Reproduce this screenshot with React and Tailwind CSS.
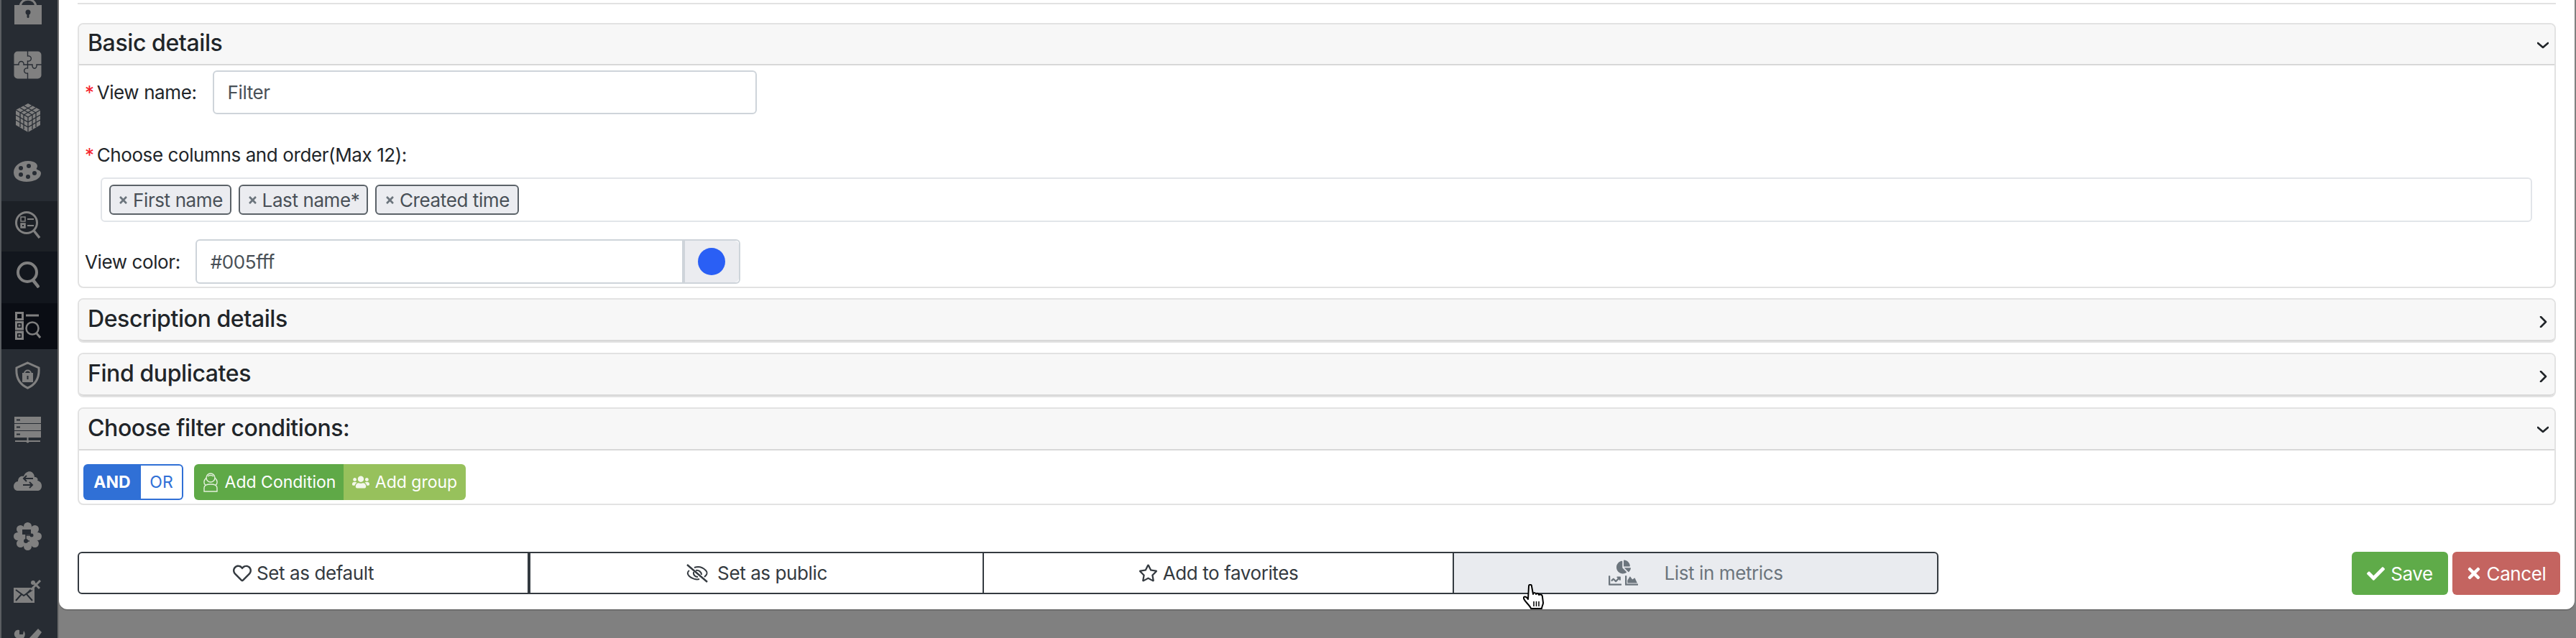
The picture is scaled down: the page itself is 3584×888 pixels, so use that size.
import { FaCheck, FaTimes, FaRegHeart, FaRegStar, FaUsers, FaChartPie, FaChartLine, FaChartArea } from "react-icons/fa";

const navDark = "#272c33";

// sidebar icons, all hand drawn, gray on the dimmed nav
const LockIcon = () => (
  <svg width="40" height="37" viewBox="0 0 40 37" className="-mt-[3px]">
    <path d="M9 12 C10 -1 30 -1 31 12" fill="none" stroke="#808080" strokeWidth="3" />
    <rect x="1" y="10" width="38" height="27" fill="#808080" />
    <circle cx="20" cy="20" r="3.5" fill={navDark} />
    <rect x="18.5" y="21" width="3" height="7" rx="1.5" fill={navDark} />
  </svg>
);

const PuzzleIcon = () => (
  <svg width="39" height="39" viewBox="0 0 39 39">
    <rect x="0.5" y="0.5" width="38" height="38" rx="5" fill="#808080" />
    <path d="M0 19 H7 C6 13 15 13 14 19 H19.5 M19.5 0 V7 C26 6 26 15 19.5 14 V24 C13 23 13 32 19.5 31 V39 M19.5 19 H26 C25 26 33 26 32 19 H39" fill="none" stroke={navDark} strokeWidth="1.4" />
  </svg>
);

const CubeIcon = () => (
  <svg width="36" height="40" viewBox="0 0 36 40">
    <path d="M18 0 L35 9 V30 L18 40 L1 30 V9 Z" fill="#808080" />
    <path d="M1 9 L18 19 L35 9 M18 19 V40 M7 6 L24 16 M12 3 L29 13 M24 3 L7 13 M29 6 L12 16 M7 12 V33 M12 15 V36 M24 15 V36 M29 12 V33 M1 16 L18 26 L35 16 M1 23 L18 33 L35 23" fill="none" stroke={navDark} strokeWidth="1.3" />
  </svg>
);

const PaletteIcon = () => (
  <svg width="39" height="29" viewBox="0 0 39 29">
    <path d="M20 0 C31 0 35 6 32 10 C30 13 39 12 38 18 C37 25 28 29 18 29 C7 29 0 24 0 16 C0 7 9 0 20 0 Z" fill="#808080" />
    <circle cx="10" cy="10" r="3" fill={navDark} />
    <circle cx="21" cy="7" r="3" fill={navDark} />
    <circle cx="10" cy="19" r="3" fill={navDark} />
    <circle cx="20" cy="22" r="3" fill={navDark} />
    <circle cx="29" cy="17" r="3" fill={navDark} />
  </svg>
);

const ListSearchIcon = ({ bg }) => (
  <svg width="36" height="38" viewBox="0 0 36 38">
    <circle cx="16" cy="16" r="14.5" fill="none" stroke="#808080" strokeWidth="3" />
    <path d="M26 27 L34 37" stroke="#808080" strokeWidth="3.5" />
    <rect x="8" y="8" width="6" height="6" fill="none" stroke="#808080" strokeWidth="1.5" />
    <rect x="8" y="17" width="6" height="6" fill="#808080" stroke="#808080" strokeWidth="1.5" />
    <rect x="10" y="19" width="2" height="2" fill={bg} />
    <path d="M17 11 H26 M17 20 H26" stroke="#808080" strokeWidth="2" />
  </svg>
);

const SearchIcon = () => (
  <svg width="32" height="37" viewBox="0 0 32 37">
    <circle cx="15" cy="15" r="13" fill="none" stroke="#808080" strokeWidth="4" />
    <path d="M23 26 L31 36" stroke="#808080" strokeWidth="4.5" />
  </svg>
);

const ListIcon = ({ bg }) => (
  <svg width="36" height="39" viewBox="0 0 36 39">
    <rect x="0" y="0" width="12" height="39" fill="#808080" />
    <path d="M0 12.5 H12 M0 26 H12" stroke={bg} strokeWidth="1" />
    <rect x="3" y="3" width="6" height="6" fill={bg} />
    <rect x="3.7" y="16.7" width="4.6" height="4.6" fill="none" stroke={bg} strokeWidth="1.4" />
    <rect x="3.7" y="30.7" width="4.6" height="4.6" fill="none" stroke={bg} strokeWidth="1.4" />
    <path d="M15 5 H33" stroke="#808080" strokeWidth="3" />
    <circle cx="24" cy="23" r="8.5" fill="none" stroke="#808080" strokeWidth="2.5" />
    <path d="M30 30 L35 36" stroke="#808080" strokeWidth="3" />
  </svg>
);

const ShieldIcon = () => (
  <svg width="35" height="39" viewBox="0 0 35 39">
    <path d="M17.5 2 L33 9 C34 22 29 32 17.5 37 C6 32 1 22 2 9 Z" fill="none" stroke="#808080" strokeWidth="3" />
    <path d="M13 17 C13 11 22 11 22 17" fill="none" stroke="#808080" strokeWidth="2" />
    <rect x="10" y="16" width="15" height="13" fill="#808080" />
    <rect x="16.5" y="20" width="2" height="5" fill={navDark} />
  </svg>
);

const ServerIcon = () => (
  <svg width="37" height="37" viewBox="0 0 37 37">
    <rect x="0" y="0" width="37" height="9" fill="#808080" />
    <rect x="0" y="10" width="37" height="9" fill="#808080" />
    <rect x="0" y="20" width="37" height="9" fill="#808080" />
    <path d="M3 4.5 H8 M3 14.5 H8 M3 24.5 H8" stroke={navDark} strokeWidth="2" />
    <path d="M1 34 H36 M18.5 29 V35" stroke="#808080" strokeWidth="2" />
    <circle cx="18.5" cy="34.5" r="2" fill="#808080" />
  </svg>
);

const CloudIcon = () => (
  <svg width="39" height="27" viewBox="0 0 39 27">
    <path d="M6 27 C-2 27 -2 15 6 14 C6 7 12 6 14 7 C17 -2 28 -2 29 8 C34 8 34 12 33 13 C41 14 41 27 33 27 Z" fill="#808080" />
    <path d="M27 10 H14 M18 6 L14 10 L18 14 M13 19 H26 M22 15 L26 19 L22 23" fill="none" stroke={navDark} strokeWidth="2" />
  </svg>
);

const GearIcon = () => (
  <svg width="39" height="39" viewBox="0 0 39 39">
    <circle cx="19.5" cy="19.5" r="14" fill="#808080" />
    {[[19.5, 5.5], [29.5, 9.5], [33.5, 19.5], [29.5, 29.5], [19.5, 33.5], [9.5, 29.5], [5.5, 19.5], [9.5, 9.5]].map(([cx, cy], i) => (
      <circle key={i} cx={cx} cy={cy} r="5.5" fill="#808080" />
    ))}
    <rect x="12" y="10" width="12" height="7" fill={navDark} />
    <path d="M17 17 V26 H22 M17 18 H24" fill="none" stroke={navDark} strokeWidth="1.5" />
    <circle cx="25" cy="18" r="2.5" fill={navDark} />
    <circle cx="17" cy="26" r="3" fill={navDark} />
  </svg>
);

const MailIcon = () => (
  <svg width="39" height="32" viewBox="0 0 39 32">
    <path d="M0 11 H25 L14 22 L29 11 V32 H0 Z" fill="#808080" />
    <path d="M3 14 L14 22 L26 14 M3 29 L11 20 M26 29 L18 20" fill="none" stroke={navDark} strokeWidth="2" />
    <path d="M24 14 L37 1 M26 2 L36 12" stroke="#808080" strokeWidth="3" />
    <circle cx="27" cy="4" r="3" fill="#808080" />
  </svg>
);

const ToolsIcon = () => (
  <svg width="39" height="20" viewBox="0 0 39 20">
    <path d="M1 6 C3 0 8 2 8 2 L8 8 L13 8 L14 3 C18 8 14 13 14 13 L22 20 H12 L8 14 C3 14 0 10 1 6 Z" fill="#808080" />
    <path d="M20 15 L34 0 L39 5 L28 20 H23 Z" fill="#808080" />
  </svg>
);

const navRows = [
  { cls: "h-[64px]", icon: <LockIcon /> },
  { cls: "h-[72px] pt-[7px]", icon: <PuzzleIcon /> },
  { cls: "h-[74px] pt-[8px]", icon: <CubeIcon /> },
  { cls: "h-[70px] pt-[14px]", icon: <PaletteIcon /> },
  { cls: "h-[70px] pt-[14px] bg-[#1c2026]", icon: <ListSearchIcon bg="#1c2026" /> },
  { cls: "h-[72px] pt-[14px] bg-[#12161d]", icon: <SearchIcon /> },
  { cls: "h-[64px] pt-[12px] bg-[#0a0d14]", icon: <ListIcon bg="#0a0d14" /> },
  { cls: "h-[84px] pt-[17px]", icon: <ShieldIcon /> },
  { cls: "h-[75px] pt-[10px]", icon: <ServerIcon /> },
  { cls: "h-[70px] pt-[11px]", icon: <CloudIcon /> },
  { cls: "h-[80px] pt-[12px]", icon: <GearIcon /> },
  { cls: "h-[70px] pt-[12px]", icon: <MailIcon /> },
  { cls: "h-[23px] pt-[10px]", icon: <ToolsIcon /> },
];

const Chevron = ({ open }) => (
  <svg width="16" height="16" viewBox="0 0 16 16" fill="none" stroke="#212529" strokeWidth="2.6" strokeLinecap="round" strokeLinejoin="round">
    {open ? <path d="M1 4 L8 10 L15 4" /> : <path d="M5 1 L12 8 L5 15" />}
  </svg>
);

// collapsible card, the open one has the body under it
const Card = ({ title, open, headerHeight, className, children }) => (
  <div className={"border-2 border-[#e2e2e2] rounded-lg " + (className || "")}>
    <div className={"flex items-center justify-between bg-[#f7f7f7] border-b-2 border-[#d8d8d8] pl-[12px] pr-[6px] " + headerHeight + (open ? " rounded-t-md" : " rounded-md")}>
      <span className="text-[32px] font-medium text-[#212529] tracking-[-0.4px] leading-none -mt-[3px]">{title}</span>
      <span className={open ? "pt-[4px] pr-[2px]" : "pt-[6px] pr-[2px]"}><Chevron open={open} /></span>
    </div>
    {children}
  </div>
);

const Chip = ({ label, width }) => (
  <span className={"flex items-center justify-center gap-[6px] h-[42px] bg-[#ebecf0] border-2 border-[#5b6268] rounded-md text-[#495057] " + width}>
    <FaTimes className="text-[#6c757d] w-[15px] h-[15px]" />
    {label}
  </span>
);

const Required = () => <span className="text-[#f5222d] mr-[4px]">*</span>;

const WomanIcon = () => (
  <svg width="24" height="28" viewBox="0 0 24 28" fill="none" stroke="#e4f0dd" strokeWidth="1.4">
    <circle cx="12" cy="8" r="6" />
    <path d="M6 8 C2 12 2 16 5 18 M18 8 C22 12 22 16 19 18 M8 6 C10 4 14 4 16 6" />
    <path d="M3 27 V22 C3 18 8 17 12 17 C16 17 21 18 21 22 V27 Z" />
  </svg>
);

const EyeSlash = () => (
  <svg width="32" height="26" viewBox="0 0 32 26" fill="none" stroke="#343a40" strokeWidth="2">
    <path d="M5 9 C2 11 2 14 5 17 C9 21 15 22 19 21 M12 5 C18 3 24 5 28 9 C30 11 30 14 28 16 L26 18" />
    <path d="M11 11 C10 15 13 18 17 18 M14 9 C18 8 22 11 22 15" />
    <path d="M2 1 L30 25" strokeWidth="2.4" />
  </svg>
);

const HandCursor = () => (
  <svg width="32" height="36" viewBox="0 0 32 36" className="absolute left-[2119px] top-[813px]">
    <path d="M8 3 C8 0 12 0 12 3 L14 14 C15 11 18 12 18 14 C19 12 22 13 22 15 C23 14 27 14 27 18 L28 26 C28 29 26 31 26 34 H11 C10 30 2 24 1 20 C0 17 4 16 7 21 Z" fill="#fff" stroke="#000" strokeWidth="2" strokeLinejoin="round" />
    <path d="M15 24 V31 M18.5 24 V31 M22 24 V31" stroke="#000" strokeWidth="1.5" />
  </svg>
);

export default function App() {
  return (
    <div className="relative flex w-[3584px] h-[888px] overflow-hidden bg-[#808080] font-['Inter',sans-serif] text-[26px] tracking-[-0.4px]">
      {/* nav */}
      <div className="w-[80px] h-full shrink-0 border-l-2 border-[#5a5d61] bg-[#272c33] overflow-hidden">
        {navRows.map((row, i) => (
          <div key={i} className={"flex justify-center pr-[5px] " + row.cls}>{row.icon}</div>
        ))}
      </div>
      <div className="w-[2px] bg-[#6e6e6e] shrink-0" />

      {/* modal */}
      <div className="w-[3500px] h-[848px] bg-white rounded-b-xl px-[26px] shrink-0 shadow-[0_2px_0_#6e6e6e]">
        <div className="h-[6px] border-b-2 border-[#e2e2e2]" />

        <Card title="Basic details" open headerHeight="h-[57px]" className="mt-[26px]">
          <div className="pt-[7px] pb-[4px] px-[6px] text-[#212529]">
            <div className="flex items-center gap-[22px]">
              <label className="pl-[2px]"><Required />View name:</label>
              <div className="flex items-center w-[757px] h-[61px] border-2 border-[#ced4da] rounded-md pl-[19px] text-[#495057]">Filter</div>
            </div>
            <label className="block mt-[37px] leading-[39px] pl-[2px]"><Required />Choose columns and order(Max 12):</label>
            <div className="flex items-center gap-[10px] mt-[12px] ml-[24px] w-[3383px] h-[62px] border-2 border-[#e2e5e9] rounded-md pl-[10px]">
              <Chip label="First name" width="w-[170px]" />
              <Chip label="Last name*" width="w-[180px]" />
              <Chip label="Created time" width="w-[200px]" />
            </div>
            <div className="flex items-center gap-[21px] mt-[24px]">
              <label className="pl-[2px]">View color:</label>
              <div className="flex w-[758px] h-[62px] border-2 border-[#ced4da] rounded-md">
                <div className="flex items-center flex-1 pl-[19px] text-[#495057]">#005fff</div>
                <div className="flex items-center justify-center w-[79px] bg-[#ebecf0] border-l-4 border-[#ced4da] rounded-r-md">
                  <span className="block w-[38px] h-[38px] rounded-full bg-[#2a5ff5]" />
                </div>
              </div>
            </div>
          </div>
        </Card>

        <Card title="Description details" headerHeight="h-[58px]" className="mt-[14px]" />
        <Card title="Find duplicates" headerHeight="h-[58px]" className="mt-[14px]" />

        <Card title="Choose filter conditions:" open headerHeight="h-[58px]" className="mt-[14px]">
          <div className="flex items-center gap-[15px] px-[6px] pt-[19px] pb-[5px] text-[23px] tracking-normal">
            <div className="flex h-[50px]">
              <span className="flex items-center justify-center w-[80px] bg-[#3070d6] text-white font-bold rounded-l-md">AND</span>
              <span className="flex items-center justify-center w-[59px] bg-white text-[#3070d6] border-2 border-l-0 border-[#3070d6] rounded-r-md">OR</span>
            </div>
            <div className="flex h-[50px] text-white">
              <span className="flex items-center justify-center gap-[8px] w-[208px] bg-[#5fa947] rounded-l-md"><WomanIcon />Add Condition</span>
              <span className="flex items-center justify-center gap-[8px] w-[170px] bg-[#97c15c] rounded-r-md"><FaUsers className="w-[24px] h-[24px] text-[#f3f7ea]" />Add group</span>
            </div>
          </div>
        </Card>

        {/* footer actions */}
        <div className="flex justify-between mt-[65px] -mr-[6px]">
          <div className="flex h-[59px] text-[#343a40]">
            <div className="flex items-center justify-center gap-[7px] w-[628px] border-2 border-[#343a40] rounded-l-md">
              <FaRegHeart className="w-[26px] h-[26px]" />Set as default
            </div>
            <div className="flex items-center justify-center gap-[12px] w-[631px] border-y-2 border-l-2 border-[#343a40]">
              <EyeSlash />Set as public
            </div>
            <div className="flex items-center justify-center gap-[7px] w-[654px] border-y-2 border-l-2 border-[#343a40]">
              <FaRegStar className="w-[27px] h-[27px]" />Add to favorites
            </div>
            <div className="flex items-center justify-center gap-[35px] w-[676px] bg-[#e9ebef] border-2 border-[#343a40] rounded-r-md text-[#6c757d]">
              <span className="flex flex-col items-center">
                <FaChartPie className="w-[20px] h-[20px] text-[#6c757d]" />
                <span className="flex gap-[3px]">
                  <FaChartLine className="w-[20px] h-[18px]" />
                  <FaChartArea className="w-[20px] h-[18px]" />
                </span>
              </span>
              List in metrics
            </div>
          </div>
          <div className="flex gap-[6px] h-[60px] text-white">
            <span className="flex items-center justify-center gap-[8px] w-[134px] bg-[#5fab49] rounded-md"><FaCheck className="w-[25px] h-[25px]" />Save</span>
            <span className="flex items-center justify-center gap-[8px] w-[150px] bg-[#c46460] rounded-md"><FaTimes className="w-[20px] h-[24px]" />Cancel</span>
          </div>
        </div>
      </div>

      <HandCursor />
    </div>
  );
}
